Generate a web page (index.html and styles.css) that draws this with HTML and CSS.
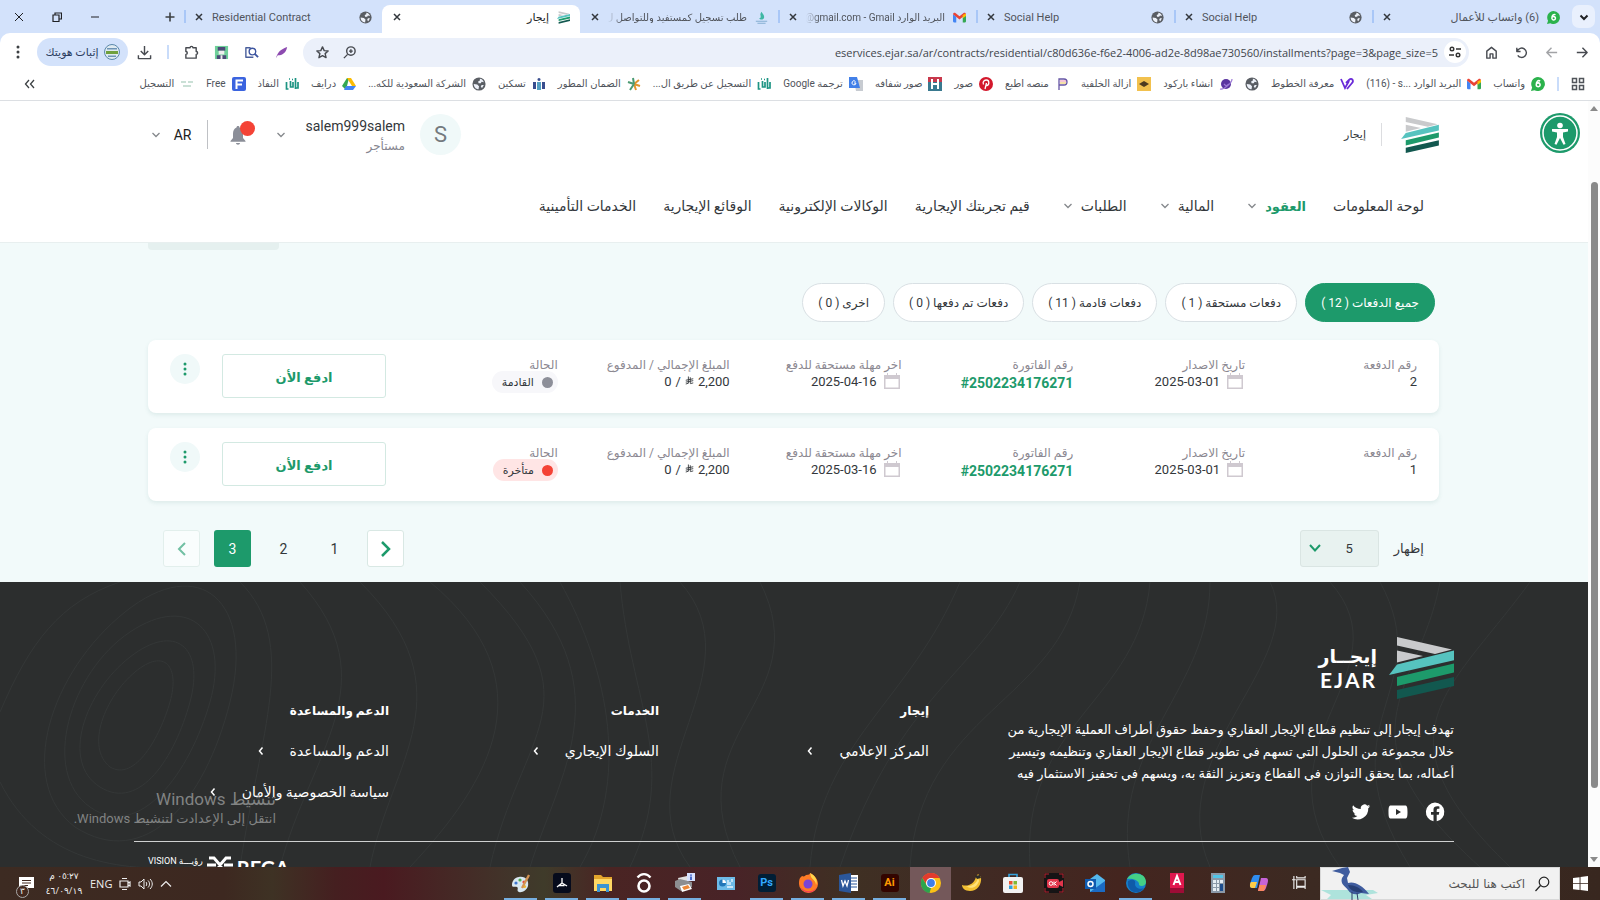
FILE: index.html
```html
<!DOCTYPE html>
<html lang="ar" dir="rtl">
<head>
    <meta charset="UTF-8">
    <meta name="viewport" content="width=device-width, initial-scale=1.0">
    <title>إيجار</title>
    <link rel="stylesheet" href="styles.css">
</head>
<body>

<!-- Shared icons -->
<svg class="sprite" width="0" height="0">
    <symbol id="logo" viewBox="0 0 65 62">
        <path fill="#c9cacc" d="M8 0l55 12.500-17 4.500L8 8.500zM8 13.500l26 5.500-26 6.500z"/>
        <path fill="#56c3bf" d="M65 13.500v9.800L0 38l8-10.500z"/>
        <path fill="#1d9a6b" d="M65 26.500v9L8 49v-9z"/>
        <path fill="#12584f" d="M65 40v9L8 62v-9z"/>
    </symbol>
    <symbol id="globe" viewBox="0 0 16 16">
        <circle cx="8" cy="8" r="7.500" fill="#5a5e64"/>
        <path fill="#eef2fa" d="M9 2c2 0 4 2 4.500 4l-2.500-.5-1 1.500H7.500L7 5l2-1zM2 8l4 .5 2 2-.5 3.500C4.500 14 2 11.500 2 8zM13.500 9l-2 3.500L10 11l1-2z"/>
    </symbol>
    <symbol id="close" viewBox="0 0 10 10"><path d="M2 2l6 6M8 2L2 8" fill="none" stroke="#33373d" stroke-width="1.500"/></symbol>
    <symbol id="down" viewBox="0 0 10 10"><path d="M1.500 3L5 6.500 8.500 3" fill="none" stroke="currentColor" stroke-width="1.300"/></symbol>
    <symbol id="left" viewBox="0 0 10 10"><path d="M6.500 1.500L3.500 5l3 3.500" fill="none" stroke="currentColor" stroke-width="1.500"/></symbol>
    <symbol id="gmail" viewBox="0 0 16 12">
        <path fill="#4285f4" d="M1 12h3V5L0 2v9z"/><path fill="#34a853" d="M12 12h3l1-1V2l-4 3z"/>
        <path fill="#ea4335" d="M0 2c0-2 2-2.500 3-1.500L8 4.500l5-4c1-1 3-.5 3 1.500L8 8.500z"/>
        <path fill="#fbbc04" d="M12 3l4-2v3l-4 3z"/>
    </symbol>
    <symbol id="whatsapp" viewBox="0 0 16 16">
        <path fill="#2bb24c" d="M8 0a8 8 0 1 1-4 15L0 16l1.300-4A8 8 0 0 1 8 0z"/>
        <path d="M10.500 4.500C8 3.500 6 5 6 9a2.200 2.200 0 1 0 .5-1.500" fill="none" stroke="#fff" stroke-width="1.800"/>
    </symbol>
    <symbol id="nafath" viewBox="0 0 14 14">
        <path d="M1.500 5v7h2M5.500 4v6H8V5M10.500 1v11M13 5v6h-2M4 2h1M7 2.500h1" fill="none" stroke="#1d9483" stroke-width="1.700"/>
    </symbol>
    <symbol id="calendar" viewBox="0 0 16 16">
        <path fill="#cfc9d0" d="M0 2h3V0h1v2h8V0h1v2h3v14H0zM1.500 6v8.500h13V6z" fill-rule="evenodd"/>
    </symbol>
    <symbol id="riyal" viewBox="0 0 12 12">
        <path d="M4.500 0v9L1 10M7 1v8M1 5l10-2M1 7.500l10-2M7 9.500l4-1" fill="none" stroke="#33373b" stroke-width="1.200"/>
    </symbol>
    <symbol id="dots" viewBox="0 0 4 14"><circle cx="2" cy="2" r="1.500"/><circle cx="2" cy="7" r="1.500"/><circle cx="2" cy="12" r="1.500"/></symbol>
</svg>

<!-- Browser tabs -->
<div class="tab-strip">
    <button class="tab-search" aria-label="Tabs"><svg width="12" height="12" viewBox="0 0 12 12"><path d="M2.500 4.500L6 8l3.500-3.500" fill="none" stroke="#202124" stroke-width="2"/></svg></button>
    <div class="tab"><svg class="favicon"><use href="#whatsapp"/></svg><span class="tab-title">(6) واتساب للأعمال</span><svg class="tab-close"><use href="#close"/></svg></div>
    <div class="tab"><svg class="favicon"><use href="#globe"/></svg><span class="tab-title" dir="ltr">Social Help</span><svg class="tab-close"><use href="#close"/></svg></div>
    <div class="tab"><svg class="favicon"><use href="#globe"/></svg><span class="tab-title" dir="ltr">Social Help</span><svg class="tab-close"><use href="#close"/></svg></div>
    <div class="tab"><svg class="favicon"><use href="#gmail"/></svg><span class="tab-title fade">البريد الوارد <bdi>@gmail.com - Gmail</bdi></span><svg class="tab-close"><use href="#close"/></svg></div>
    <div class="tab before-active"><svg class="favicon" viewBox="0 0 16 16"><path fill="#3fb7a4" d="M8 1c2 3 4 5 3 8-1 2-5 2-6 0 2 0 2-1 2-3-1-2 0-3 1-5z"/><path d="M1 12.500h14M3 15h10" stroke="#85aed2" stroke-width="1.300"/></svg><span class="tab-title fade">طلب تسجيل كمستفيد وللتواصل ل</span><svg class="tab-close"><use href="#close"/></svg></div>
    <div class="tab active"><svg class="favicon"><use href="#logo"/></svg><span class="tab-title">إيجار</span><svg class="tab-close"><use href="#close"/></svg></div>
    <div class="tab"><svg class="favicon"><use href="#globe"/></svg><span class="tab-title" dir="ltr">Residential Contract</span><svg class="tab-close"><use href="#close"/></svg></div>
    <button class="new-tab" aria-label="New tab"><svg width="12" height="12" viewBox="0 0 12 12"><path d="M6 1.500v9M1.500 6h9" stroke="#3c4043" stroke-width="1.600"/></svg></button>
    <div class="window-buttons">
        <button aria-label="Minimize"><svg width="10" height="10" viewBox="0 0 10 10"><path d="M1 5h8" stroke="#202124"/></svg></button>
        <button aria-label="Restore"><svg width="10" height="10" viewBox="0 0 10 10"><path d="M1 3h6v6.500H1zM3 3V1h6.500v6H7" fill="none" stroke="#202124" stroke-width="1.200"/></svg></button>
        <button aria-label="Close"><svg width="10" height="10" viewBox="0 0 10 10"><path d="M1 1l8 8M9 1L1 9" stroke="#202124"/></svg></button>
    </div>
</div>

<!-- Address bar -->
<div class="toolbar">
    <div class="nav-buttons">
        <button aria-label="Forward"><svg viewBox="0 0 16 16"><path d="M3 8h11M9 3l5 5-5 5"/></svg></button>
        <button class="off" aria-label="Back"><svg viewBox="0 0 16 16"><path d="M14 8H3M8 3L3 8l5 5"/></svg></button>
        <button aria-label="Reload"><svg viewBox="0 0 16 16"><path d="M3 3v4h4M3.500 6.500A5 5 0 1 1 4 11"/></svg></button>
        <button aria-label="Home"><svg viewBox="0 0 16 16"><path d="M3 14V6.500L8 2.500l5 4V14H9.500V9.500h-3V14z"/></svg></button>
    </div>
    <div class="omnibox">
        <button class="site-info" aria-label="Site info"><svg width="14" height="14" viewBox="0 0 14 14"><path d="M8 4h5M1 10h5" stroke="#333" stroke-width="1.500"/><circle cx="4" cy="4" r="1.800" fill="none" stroke="#333" stroke-width="1.400"/><circle cx="10" cy="10" r="1.800" fill="none" stroke="#333" stroke-width="1.400"/></svg></button>
        <input class="url" type="text" dir="ltr" aria-label="Address" value="eservices.ejar.sa/ar/contracts/residential/c80d636e-f6e2-4006-ad2e-8d98ae730560/installments?page=3&amp;page_size=5">
        <svg viewBox="0 0 16 16"><circle cx="9.500" cy="6.500" r="4.500"/><path d="M6 10l-4 4M9.500 4.500v4M7.500 6.500h4"/></svg>
        <svg viewBox="0 0 16 16"><path d="M8 2l1.800 4 4.200.4-3.200 2.800 1 4.300L8 11.300l-3.800 2.200 1-4.300L2 6.400 6.200 6z"/></svg>
    </div>
    <div class="extensions">
        <svg viewBox="0 0 16 16"><path d="M2 14C4 7 8 4 14 2c-1 6-5 9-10 9z" fill="#8d4bb0" stroke="none"/></svg>
        <svg viewBox="0 0 16 16"><path d="M7 3H2v10h8" stroke="#4a5f9c"/><circle cx="9" cy="7" r="3.500" stroke="#3d55a0"/><path d="M11.500 9.500L15 13" stroke="#3d55a0" stroke-width="2"/></svg>
        <svg viewBox="0 0 16 16"><path fill="#6ed09a" stroke="none" d="M1 1h14v14H1z"/><path fill="#4c4a78" stroke="none" d="M4 2h8v4H4zM3 15v-4h10v4z"/><path fill="#eee" stroke="none" d="M5 6h6v4H5zM7 11h2v4H7z"/></svg>
        <svg viewBox="0 0 16 16"><path d="M2 3h4.500a1.500 1.500 0 0 1 3 0H13v4a1.500 1.500 0 0 1 0 3v4H2v-4a1.500 1.500 0 0 0 0-3z"/></svg>
        <span class="bar"></span>
        <svg viewBox="0 0 16 16"><path d="M8 1v9M4 6.500l4 4 4-4M1.500 11v3.500h13V11"/></svg>
    </div>
    <button class="profile"><svg width="16" height="16" viewBox="0 0 16 16"><circle cx="8" cy="8" r="7.500" fill="#dfeaf0" stroke="#5b88aa"/><path fill="#6fa03c" d="M2 7h12v3H2z"/><path fill="#6e94b5" d="M3 4h10v1.500H3zM4 11.500h8V13H4z"/></svg><span>إثبات هويتك</span></button>
    <button class="menu" aria-label="Menu"><svg width="4" height="14" fill="#3c4043"><use href="#dots"/></svg></button>
</div>

<!-- Bookmarks -->
<nav class="bookmarks">
    <svg class="apps" viewBox="0 0 14 14"><path d="M1.500 1.500h4v4h-4zM8.500 1.500h4v4h-4zM1.500 8.500h4v4h-4zM8.500 8.500h4v4h-4z" fill="none" stroke="#50545a" stroke-width="1.500"/></svg>
    <span class="bar"></span>
    <a href="#"><svg><use href="#whatsapp"/></svg>واتساب</a>
    <a href="#"><svg><use href="#gmail"/></svg><span>البريد الوارد <bdi dir="ltr">(116) - s...</bdi></span></a>
    <a href="#"><svg viewBox="0 0 14 14"><path d="M1 2l4 9 4-7M6 6l3-3c3-3 5 1 3 3l-5 6" fill="none" stroke="#6a2bd8" stroke-width="1.800"/></svg>معرفة الخطوط</a>
    <a href="#" aria-label="Site"><svg><use href="#globe"/></svg></a>
    <a href="#"><svg viewBox="0 0 14 14"><circle cx="7" cy="7" r="5" fill="#5a35a0"/><path d="M1 12C5 13 13 6 13 2M5 7l2 2 3-2" fill="none" stroke="#9c7ad6" stroke-width="1.200"/></svg>انشاء باركود</a>
    <a href="#"><svg viewBox="0 0 14 14"><path fill="#f2c14e" d="M0 0h14v14H0z"/><path fill="#4e3b20" d="M2 7l5-3 5 3-5 3z"/></svg>ازالة الخلفية</a>
    <a href="#"><svg viewBox="0 0 14 14"><path d="M4 13V2h5a3 3 0 0 1 0 6H4" fill="#fff" stroke="#6655a5" stroke-width="1.300"/><path d="M5 4h6" stroke="#eb8ab2"/><path d="M5 6h6" stroke="#e9c351"/></svg>منصه اطبع</a>
    <a href="#"><svg viewBox="0 0 14 14"><circle cx="7" cy="7" r="7" fill="#d3182c"/><path d="M6 12l1.500-6M4.500 7.500C3 4 6 3 7.500 3c3 0 3 5 .5 5.500C7 8.500 6.800 8 6.800 8" fill="none" stroke="#fff" stroke-width="1.300"/></svg>صور</a>
    <a href="#"><svg viewBox="0 0 14 14"><path fill="#c8394c" d="M0 0h14v5H0z"/><path fill="#39798f" d="M0 5h14v9H0z"/><path fill="#fff" d="M3 2h2v4h4V2h2v10H9V8H5v4H3z"/></svg>صور شفافه</a>
    <a href="#"><svg viewBox="0 0 14 14"><path fill="#c7cbd1" d="M5 3h9v11H7z"/><path fill="#4280e8" d="M0 0h8l3 11H0z"/><path d="M6.500 4.500A2 2 0 1 0 7 6H5" fill="none" stroke="#fff"/></svg><span>ترجمة Google</span></a>
    <a href="#"><svg><use href="#nafath"/></svg>التسجيل عن طريق ال...</a>
    <a href="#"><svg viewBox="0 0 14 14"><path d="M7 7l5-4M7 7l6 2M7 7l2 6" stroke="#e2952c" stroke-width="2"/><path d="M7 7L1 5M7 7l-4 6M7 7L6 1" stroke="#4b9a72" stroke-width="2"/></svg>الضمان المطور</a>
    <a href="#"><svg viewBox="0 0 14 14"><path fill="#394d8e" d="M7 1c2 0 2 3 0 3s-2-3 0-3zM1 5h3v7H1zM10 5h3v7h-3z"/><path fill="#54a0c2" d="M5 5h4v8H5z"/></svg>تسكين</a>
    <a href="#"><svg><use href="#globe"/></svg>الشركة السعودية للكه...</a>
    <a href="#"><svg viewBox="0 0 14 14"><path fill="#34a853" d="M5 1h2L4 13 0 9z"/><path fill="#fbbc04" d="M5 1h4l5 8h-4z"/><path fill="#4285f4" d="M4 9h10l-3 4H2z"/></svg>درايف</a>
    <a href="#"><svg><use href="#nafath"/></svg>النفاذ</a>
    <a href="#"><svg viewBox="0 0 14 14"><rect width="14" height="14" rx="2" fill="#3b64df"/><path d="M4.500 12V3.500H11M4.500 7.500H10" fill="none" stroke="#fff" stroke-width="2"/></svg>Free</a>
    <a href="#"><svg viewBox="0 0 14 14"><path d="M1 5h5M8 5h5M3 9h8" stroke="#b9d6c9" stroke-width="1.500"/></svg>التسجيل</a>
    <button class="more" aria-label="More bookmarks"><svg width="12" height="12" viewBox="0 0 12 12"><path d="M5 2L1.500 6 5 10M10 2L6.500 6l3.500 4" fill="none" stroke="#3c4043" stroke-width="1.300"/></svg></button>
</nav>

<div class="viewport">
    <div class="scrollbar">
        <svg width="8" height="6" viewBox="0 0 8 6"><path d="M0 5h8L4 0z" fill="#8a8a8a"/></svg>
        <div class="track"><div class="thumb"></div></div>
        <svg width="8" height="6" viewBox="0 0 8 6"><path d="M0 1h8L4 6z" fill="#8a8a8a"/></svg>
    </div>

    <div class="page">
        <header class="site-header">
            <div class="top-row">
                <div class="brand">
                    <svg width="38" height="36"><use href="#logo"/></svg>
                    <span class="brand-line"></span>
                    <span class="brand-name">إيجار</span>
                </div>
                <div class="account">
                    <span class="avatar">S</span>
                    <div class="user"><span class="user-name">salem999salem</span><span class="user-role">مستأجر</span></div>
                    <svg class="chev"><use href="#down"/></svg>
                    <button class="bell" aria-label="Notifications"><svg width="16" height="20" viewBox="0 0 16 20"><path fill="#8b8e98" d="M8 1c1 0 1.500.7 1.500 1.500C12 3.500 13 6 13 9v4l2.500 3v.8H.5V16L3 13V9c0-3 1-5.500 3.500-6.500C6.500 1.700 7 1 8 1zM6 18h4c0 2.300-4 2.300-4 0z"/></svg><span class="badge"></span></button>
                    <span class="lang-line"></span>
                    <button class="lang">AR <svg class="chev"><use href="#down"/></svg></button>
                </div>
            </div>
            <nav class="main-nav">
                <a href="#">لوحة المعلومات</a>
                <a href="#" class="current">العقود <svg class="chev"><use href="#down"/></svg></a>
                <a href="#">المالية <svg class="chev"><use href="#down"/></svg></a>
                <a href="#">الطلبات <svg class="chev"><use href="#down"/></svg></a>
                <a href="#">قيم تجربتك الإيجارية</a>
                <a href="#">الوكالات الإلكترونية</a>
                <a href="#">الوقائع الإيجارية</a>
                <a href="#">الخدمات التأمينية</a>
            </nav>
            <button class="access" aria-label="Accessibility"><svg width="40" height="40" viewBox="0 0 40 40"><circle cx="20" cy="20" r="20" fill="#1d9a6b"/><circle cx="20" cy="20" r="17" fill="none" stroke="#fff" stroke-width="1.500"/><circle cx="20" cy="12.500" r="2.800" fill="#fff"/><path fill="#fff" d="M12 16h16v2.500l-5 1V24l2.500 7-2 .7L20 25l-3.500 6.700-2-.7 2.500-7v-4.500l-5-1z"/></svg></button>
        </header>

        <main class="content">
            <div class="scrolled-button"></div>
            <div class="filters">
                <button class="selected">جميع الدفعات ( 12 )</button>
                <button>دفعات مستحقة ( 1 )</button>
                <button>دفعات قادمة ( 11 )</button>
                <button>دفعات تم دفعها ( 0 )</button>
                <button>اخرى ( 0 )</button>
            </div>

            <div class="payment">
                <div class="cell"><span class="label">رقم الدفعة</span><span class="value">2</span></div>
                <div class="cell"><span class="label">تاريخ الاصدار</span><span class="value"><svg class="cal"><use href="#calendar"/></svg><span>2025-03-01</span></span></div>
                <div class="cell"><span class="label">رقم الفاتورة</span><a href="#" class="invoice" dir="ltr">#2502234176271</a></div>
                <div class="cell"><span class="label">اخر مهلة مستحقة للدفع</span><span class="value"><svg class="cal"><use href="#calendar"/></svg><span>2025-04-16</span></span></div>
                <div class="cell"><span class="label">المبلغ الإجمالي / المدفوع</span><span class="value amount"><span>2,200</span><svg class="sar"><use href="#riyal"/></svg><span>/</span><span>0</span></span></div>
                <div class="cell"><span class="label">الحالة</span><span class="status"><i></i>القادمة</span></div>
                <button class="pay">ادفع الأن</button>
                <button class="options" aria-label="Options"><svg width="4" height="14"><use href="#dots"/></svg></button>
            </div>

            <div class="payment">
                <div class="cell"><span class="label">رقم الدفعة</span><span class="value">1</span></div>
                <div class="cell"><span class="label">تاريخ الاصدار</span><span class="value"><svg class="cal"><use href="#calendar"/></svg><span>2025-03-01</span></span></div>
                <div class="cell"><span class="label">رقم الفاتورة</span><a href="#" class="invoice" dir="ltr">#2502234176271</a></div>
                <div class="cell"><span class="label">اخر مهلة مستحقة للدفع</span><span class="value"><svg class="cal"><use href="#calendar"/></svg><span>2025-03-16</span></span></div>
                <div class="cell"><span class="label">المبلغ الإجمالي / المدفوع</span><span class="value amount"><span>2,200</span><svg class="sar"><use href="#riyal"/></svg><span>/</span><span>0</span></span></div>
                <div class="cell"><span class="label">الحالة</span><span class="status late"><i></i>متأخرة</span></div>
                <button class="pay">ادفع الأن</button>
                <button class="options" aria-label="Options"><svg width="4" height="14"><use href="#dots"/></svg></button>
            </div>

            <div class="list-footer">
                <div class="page-size">
                    <label for="pageSize">إظهار</label>
                    <div class="select-box">
                        <select id="pageSize"><option>5</option></select>
                        <svg width="14" height="14" viewBox="0 0 14 14"><path d="M2 4l5 5.500L12 4" fill="none" stroke="#1d9a6b" stroke-width="2"/></svg>
                    </div>
                </div>
                <div class="pager">
                    <button class="arrow" aria-label="Previous"><svg width="16" height="18" viewBox="0 0 16 18"><path d="M4 2l7 7-7 7" fill="none" stroke="#1d9a6b" stroke-width="2.500"/></svg></button>
                    <button>1</button>
                    <button>2</button>
                    <button class="selected">3</button>
                    <button class="arrow" disabled aria-label="Next"><svg width="16" height="18" viewBox="0 0 16 18"><path d="M11 3L5 9l6 6" fill="none" stroke="#1d9a6b" stroke-width="2"/></svg></button>
                </div>
            </div>
        </main>

        <footer class="site-footer">
            <svg class="contours" viewBox="0 0 1588 285" preserveAspectRatio="none" fill="none" stroke="#343737">
                <path d="M110 185c-25-20-5-70 25-95s45-5 35 30-35 80-60 65zM100 205c-40-25-15-95 30-130s75-10 60 45-50 110-90 85zM90 225C40 190 70 90 130 50s100 0 80 70-70 140-120 105zM75 245C15 200 50 90 125 30s130-10 105 90S145 290 75 245zM0 130C30 60 60 20 120 0M0 200c40 80 120 90 190 85"/>
                <path d="M240 0c60 60 20 150 0 285M300 0c90 100 10 170-20 285M360 0c110 110 30 180 10 285M430 0c120 100 60 200-20 285M480 0c120 120 40 150 10 285M520 0c100 110 40 190 10 285M560 0c50 90 70 200 20 285M620 0c10 120 60 180 10 285M680 0c80 90-60 190 10 285M760 0c60 120-90 150-20 285"/>
                <path d="M960 0c-50 120-140 160-150 285M1020 0c-40 90-120 110-180 285M1080 0c-20 120-160 130-170 285M1150 0c-10 120-130 140-120 285M1210 0c0 110-100 160-80 285M1270 0c40 80-110 170-60 285M1330 0c80 90-80 160 10 285M1380 0c60 110-60 140 30 285M1440 0c-20 110-110 150 40 285M1530 0c-80 110-160 150-20 285"/>
            </svg>
            <div class="footer-main">
                <div class="about">
                    <div class="footer-logo"><svg width="65" height="62"><use href="#logo"/></svg><div class="logo-text"><b>إيجــار</b><b class="latin">EJAR</b></div></div>
                    <p>تهدف إيجار إلى تنظيم قطاع الإيجار العقاري وحفظ حقوق أطراف العملية الإيجارية من<br>خلال مجموعة من الحلول التي تسهم في تطوير قطاع الإيجار العقاري وتنظيمه وتيسير<br>أعماله، بما يحقق التوازن في القطاع وتعزيز الثقة به، ويسهم في تحفيز الاستثمار فيه</p>
                    <div class="social">
                        <a href="#" aria-label="Facebook"><svg viewBox="0 0 20 20"><path fill="#fff" d="M10 .5a9.500 9.500 0 0 1 1.700 18.800v-6.500h2.100l.5-2.800h-2.600V8.300c0-.9.400-1.600 1.500-1.600h1.200V4.400C11 3.800 8.500 4.400 8.500 7.600V10H6v2.800h2.500v6.500A9.500 9.500 0 0 1 10 .5z"/></svg></a>
                        <a href="#" aria-label="YouTube"><svg viewBox="0 0 20 20"><path fill="#fff" fill-rule="evenodd" d="M3 3.500h14c2 0 2.500 1.500 2.500 6.500s-.5 6.500-2.500 6.500H3C1 16.500.5 15 .5 10S1 3.500 3 3.500zM8 7v6l5-3z"/></svg></a>
                        <a href="#" aria-label="Twitter"><svg viewBox="0 0 24 24"><path fill="#fff" d="M23 5.100a9 9 0 0 1-2.600.7 4.500 4.500 0 0 0 2-2.500c-.9.500-1.900.9-2.900 1.100a4.500 4.500 0 0 0-7.700 4.100A12.800 12.800 0 0 1 2.500 3.800a4.500 4.500 0 0 0 1.400 6 4.500 4.500 0 0 1-2-.6c0 2.200 1.500 4.100 3.600 4.500-.7.200-1.400.2-2 .1a4.500 4.500 0 0 0 4.200 3.100A9 9 0 0 1 1 18.800 12.800 12.800 0 0 0 20.700 7.400c.9-.6 1.700-1.400 2.300-2.300z"/></svg></a>
                    </div>
                </div>
                <div class="links">
                    <h4>إيجار</h4>
                    <a href="#">المركز الإعلامي <svg><use href="#left"/></svg></a>
                </div>
                <div class="links">
                    <h4>الخدمات</h4>
                    <a href="#">السلوك الإيجاري <svg><use href="#left"/></svg></a>
                </div>
                <div class="links">
                    <h4>الدعم والمساعدة</h4>
                    <a href="#">الدعم والمساعدة <svg><use href="#left"/></svg></a>
                    <a href="#">سياسة الخصوصية والأمان <svg><use href="#left"/></svg></a>
                </div>
            </div>
            <div class="partners">
                <b>REGA</b>
                <svg width="26" height="22" viewBox="0 0 26 22"><path d="M2 2h5l6 7 6-7h5M0 9h9M26 9h-9M4 20l9-10 9 10" fill="none" stroke="#fff" stroke-width="3"/></svg>
                <span>VISION رؤيـــة</span>
            </div>
        </footer>

        <div class="activate"><span class="activate-title">تنشيط Windows</span><span>انتقل إلى الإعدادت لتنشيط Windows.</span></div>
    </div>
</div>

<!-- Windows taskbar -->
<div class="taskbar">
    <button class="start" aria-label="Start"><svg width="15" height="15" viewBox="0 0 16 16"><path fill="#fff" d="M0 2.200l7-1v6.500H0zM8 1l8-1v7.700H8zM0 8.500h7V15l-7-1zM8 8.500h8V16l-8-1z"/></svg></button>
    <div class="search">
        <svg width="16" height="16" viewBox="0 0 16 16"><circle cx="10" cy="6" r="4.800" fill="none" stroke="#222" stroke-width="1.200"/><path d="M6.500 9.500L1.500 15" stroke="#222" stroke-width="1.200"/></svg>
        <input type="text" placeholder="اكتب هنا للبحث" aria-label="بحث">
        <svg width="58" height="33" viewBox="0 0 58 33"><path fill="#aee3dc" d="M0 23h52l5 3-12 2 6 4H6l4-4z"/><path fill="#3f5c9e" d="M11 4l10-3 6-1 2 5-3 6 1 5c6-2 14 2 21 11l-8-1c-4 2-10 2-13-3-3-4-8-6-6-12l2-3-4-2z"/><path fill="#273f75" d="M27 18c7 0 12 3 15 7-7 1-13-1-15-7z"/><path d="M31 25v8M36 26l1 7" stroke="#2d3d68"/></svg>
    </div>
    <button class="task" aria-label="Task view"><svg class="small" viewBox="0 0 16 16"><path d="M2 1v14M0 5h4M5 5h9v7H5zM5 1v2h9V1M5 15v-2h9v2" fill="none" stroke="#eee" stroke-width="1.200"/></svg></button>
    <button class="task" aria-label="Copilot"><svg viewBox="0 0 20 20"><path fill="#2f8df0" d="M6 2h5L8 15H3c-3 0-2-4-1-7s2-6 4-6z"/><path fill="#ffcb47" d="M2 9h6l-2 6H3c-2 0-3-3-1-6z"/><path fill="#c763d8" d="M14 18H9l3-13h5c3 0 2 4 1 7s-2 6-4 6z"/><path fill="#fb8760" d="M9 18l1.500-6H17c-1 4-1.500 6-3 6z"/></svg></button>
    <button class="task" aria-label="Calculator"><svg viewBox="0 0 20 20"><path fill="#8b99a8" d="M3 0h14v20H3z"/><path fill="#52c5e8" d="M5 2h10v3H5z"/><path fill="#e6edf3" d="M5 7h3v3H5zM9 7h2v3H9zM5 11h3v3H5zM9 11h2v3H9zM5 15h3v3H5zM9 15h2v3H9zM12 7h3v3h-3z"/><path fill="#1d4d8c" d="M12 11h3v7h-3z"/></svg></button>
    <button class="task" aria-label="AutoCAD"><svg viewBox="0 0 20 20"><path fill="#e0184e" d="M3 0h14v20H3z"/><path fill="#9d0c36" d="M3 15h14v5H3z"/><path d="M6.500 12L10 3l3.500 9M8 9h4" fill="none" stroke="#fff" stroke-width="2"/></svg></button>
    <button class="task open" aria-label="Edge"><svg viewBox="0 0 20 20"><circle cx="10" cy="10" r="10" fill="#1580cc"/><path fill="#45cf86" d="M1 6c4-8 19-7 19 3 0 4-5 5-7 3 1-5-8-7-12-6z"/><path fill="#0f5ba8" d="M2 8c6-3 8 0 7 3 0 4 5 6 9 4-5 8-18 4-16-7z"/></svg></button>
    <button class="task" aria-label="Outlook"><svg viewBox="0 0 20 20"><path fill="#54b8ee" d="M5 6l7-5 8 6v12H5z"/><path fill="#1b6bc4" d="M5 19l15-11v11z"/><path fill="#0f5bb0" d="M0 6h11v10H0z"/><circle cx="5.500" cy="11" r="2.500" fill="none" stroke="#fff" stroke-width="1.500"/></svg></button>
    <button class="task" aria-label="Recorder"><svg viewBox="0 0 20 20"><rect width="20" height="20" rx="3" fill="#161415"/><path d="M1 5V1h4M15 1h4v4M1 15v4h4M15 19h4v-4" fill="none" stroke="#b6212f"/><rect x="3" y="6" width="12" height="9" rx="2" fill="#e1354b"/><path fill="#e1354b" d="M15 9l4-2v7l-4-2z"/><circle cx="7" cy="10.500" r="1.800" fill="none" stroke="#fff"/><path d="M10 8.500v4M12.500 8.500l-2 2 2 2" fill="none" stroke="#fff"/></svg></button>
    <button class="task" aria-label="Store"><svg viewBox="0 0 20 20"><path d="M6 5V1.500h8V5" fill="none" stroke="#36a3dd" stroke-width="1.600"/><rect x="0" y="4" width="20" height="16" rx="2" fill="#f2f2f2"/><path fill="#e95433" d="M6 8h3.500v3.500H6z"/><path fill="#80b935" d="M10.500 8H14v3.500h-3.500z"/><path fill="#2da0dc" d="M6 12.500h3.500V16H6z"/><path fill="#f1b51c" d="M10.500 12.500H14V16h-3.500z"/></svg></button>
    <button class="task" aria-label="Banana"><svg viewBox="0 0 20 20"><path fill="#f2bf32" d="M16 1l3 3c1 8-4 14-11 14-5 0-8-3-8-6 6 2 12-1 14-8z"/><path fill="#ffe27a" d="M4 13c6 1 11-3 12-8l1 3c-2 6-7 9-13 5z"/><path fill="#2a2a2a" d="M13 3l5-1 1 3-4 1z"/></svg></button>
    <button class="task current" aria-label="Chrome"><svg viewBox="0 0 20 20"><circle cx="10" cy="10" r="10" fill="#fbc116"/><path fill="#e33b2e" d="M1.300 5A10 10 0 0 1 18.700 5H10L6 12z"/><path fill="#2da44e" d="M1.300 5L6 12.500l4 2.500-1.500 5A10 10 0 0 1 1.300 5z"/><circle cx="10" cy="10" r="5" fill="#fff"/><circle cx="10" cy="10" r="3.900" fill="#3f7ee8"/></svg></button>
    <button class="task open" aria-label="Illustrator"><span class="adobe ai">Ai</span></button>
    <button class="task open" aria-label="Word"><svg viewBox="0 0 20 20"><path fill="#fff" d="M10 2h9v16h-9z"/><path d="M12 5h6M12 8h6M12 11h6M12 14h6" stroke="#2b579a"/><path fill="#2b579a" d="M0 2l12-2v20L0 18z"/><path d="M2.500 7L4 13l2-5 2 5 1.500-6" fill="none" stroke="#fff" stroke-width="1.300"/></svg></button>
    <button class="task open" aria-label="Firefox"><svg viewBox="0 0 20 20"><path fill="#ff7b26" d="M2 5l2-2c2 1 3 0 4-1 3 0 4-1 4-2 4 2 8 6 8 11a9.500 9 0 0 1-19 0c0-2 0-4 1-6z"/><path fill="#f23b5d" d="M1 9c0 9 13 13 18 5-3 8-17 8-18-5z"/><circle cx="10" cy="11" r="4.500" fill="#7a44d6"/><path fill="#ffd54b" d="M12 0c6 3 8 8 6 12 0-4-3-5-5-8z"/></svg></button>
    <button class="task open" aria-label="Photoshop"><span class="adobe ps">Ps</span></button>
    <button class="task" aria-label="Control panel"><svg viewBox="0 0 20 20"><rect x="1" y="4" width="18" height="13" fill="#6dbbe8"/><circle cx="6.500" cy="10" r="3.500" fill="#2377b8"/><path d="M6.500 10V6.500A3.500 3.500 0 0 1 10 10z" fill="#fff"/><path d="M12 7v5M14 9v3M16 6v3M11 14h6" stroke="#e9f6ff" stroke-width="1.300"/></svg></button>
    <button class="task open" aria-label="Printer"><svg viewBox="0 0 20 20"><path fill="#e2e2e2" d="M3 5l9-2 2 5-9 4z"/><path fill="#8c8e91" d="M0 8l5-2 12 3v5l-11 4-6-4z"/><path fill="#fff" d="M5 13l9-2 3 5-10 3z"/><path fill="#ec8838" d="M7 14l6-2 2 3-6 2z"/><path fill="#d7e2ff" d="M12 0h8v8h-8z"/><path d="M16 1.500v1.200M16 3.500V7" stroke="#244abb" stroke-width="1.600"/></svg></button>
    <button class="task open" aria-label="Scanner"><svg viewBox="0 0 20 20"><circle cx="10" cy="13" r="5.500" fill="none" stroke="#fff" stroke-width="2.600"/><path d="M3.500 4.500C7 0 13 0 16.500 4.500" fill="none" stroke="#fff" stroke-width="2.200"/></svg></button>
    <button class="task open" aria-label="Explorer"><svg viewBox="0 0 20 20"><path fill="#e3a52d" d="M1 2h7l2 2h9v14H1z"/><path fill="#ffd764" d="M1 6h18v12H1z"/><path fill="#3b93d3" d="M4 11h12v8h-3v-4H7v4H4z"/></svg></button>
    <button class="task open" aria-label="Acrobat"><svg viewBox="0 0 20 20"><rect x="1" width="18" height="20" rx="3" fill="#060b1c"/><path d="M10 5v5l-5 4M10 10l5 3M6.500 12.500h6" fill="none" stroke="#fff" stroke-width="1.300"/></svg></button>
    <button class="task open" aria-label="Paint"><svg viewBox="0 0 20 20"><path fill="#d8e8f1" d="M8 4c7-1 10 4 9 9-1 4-6 7-9 6s0-4-2-5-5 1-5-2c0-4 3-8 7-8z"/><circle cx="5" cy="10" r="1.600" fill="#3d76cf"/><circle cx="9" cy="7" r="1.600" fill="#4cae4f"/><circle cx="13" cy="9" r="1.600" fill="#e5473c"/><circle cx="13.500" cy="13.500" r="1.600" fill="#f0b92d"/><path d="M11 15l7-13" stroke="#d39453" stroke-width="2.300"/></svg></button>

    <div class="tray">
        <svg width="12" height="12" viewBox="0 0 12 12"><path d="M1 8.500L6 3.500l5 5" fill="none" stroke="#eee" stroke-width="1.200"/></svg>
        <svg width="15" height="14" viewBox="0 0 15 14"><path d="M1 5h2l3-3v10L3 9H1zM8 5c1 1 1 3 0 4M10 3.500c2 2 2 5 0 7M12 2c3 3 3 7 0 10" fill="none" stroke="#eee"/></svg>
        <svg width="12" height="14" viewBox="0 0 12 14"><path d="M1 4h8v6H1zM9 6l2-1v4l-2-1M3 1.500h5M3 12.500h5" fill="none" stroke="#eee" stroke-width="1.200"/></svg>
        <span class="keyboard">ENG</span>
        <div class="clock"><span>٠٥:٢٧ م</span><span>٤٦/٠٩/١٩</span></div>
        <button class="notes" aria-label="Notifications"><svg width="15" height="14" viewBox="0 0 15 14"><path fill="#fff" d="M0 0h15v11H9l-3 3v-3H0z"/><path d="M3 3.500h9M3 6h9M3 8.500h6" stroke="#42291f"/></svg><span>٣</span></button>
    </div>
</div>

</body>
</html>
```

FILE: styles.css
```css
* {
    box-sizing: border-box;
}
body {
    margin: 0;
    height: 100vh;
    display: flex;
    flex-direction: column;
    overflow: hidden;
    background: #d3e2fb;
    color: #33373b;
    font-family: Roboto, "DejaVu Sans", sans-serif;
    font-size: 12px;
}
button {
    border: 0;
    padding: 0;
    background: none;
    color: inherit;
    font: inherit;
    cursor: pointer;
    display: flex;
    align-items: center;
    justify-content: center;
}
a {
    color: inherit;
    text-decoration: none;
}
svg {
    flex: none;
    display: block;
}
.sprite {
    position: absolute;
}

/* tabs */
.tab-strip {
    height: 33px;
    flex: none;
    display: flex;
    align-items: center;
    padding-right: 5px;
    color: #50545b;
    font-size: 11px;
}
.tab-search {
    width: 23px;
    height: 23px;
    border-radius: 7px;
    background: #e9f0fd;
    margin-left: 2px;
}
.tab {
    flex: 0 1 198px;
    min-width: 0;
    height: 28px;
    align-self: flex-end;
    display: flex;
    align-items: center;
    gap: 8px;
    padding: 0 10px 4px;
    position: relative;
}
.tab::after {
    content: "";
    position: absolute;
    left: 0;
    top: 5px;
    width: 2px;
    height: 13px;
    background: #a9c7f7;
}
.tab.active::after,
.tab.before-active::after {
    display: none;
}
.tab.active {
    background: #fff;
    border-radius: 8px 8px 0 0;
    color: #202124;
}
.favicon {
    width: 13px;
    height: 13px;
}
.tab-close {
    width: 10px;
    height: 10px;
}
.tab-title {
    flex: 1;
    min-width: 0;
    overflow: hidden;
    white-space: nowrap;
}
.fade {
    font-size: 10px;
    mask-image: linear-gradient(to left, #000 90%, transparent);
}
.new-tab {
    width: 28px;
    height: 24px;
}
.window-buttons {
    margin-right: auto;
    display: flex;
}
.window-buttons button {
    width: 38px;
    height: 33px;
}

/* toolbar */
.toolbar {
    height: 36px;
    flex: none;
    display: flex;
    align-items: center;
    padding: 2px 4px 0 7px;
    background: #fff;
    border-radius: 10px 10px 0 0;
}
.toolbar svg {
    stroke-linejoin: round;
}
.nav-buttons {
    display: flex;
}
.nav-buttons button {
    width: 30px;
    height: 28px;
}
.nav-buttons svg,
.omnibox > svg,
.extensions svg {
    width: 15px;
    height: 15px;
    fill: none;
    stroke: #474a50;
    stroke-width: 1.5px;
}
.nav-buttons .off {
    opacity: 0.5;
}
.omnibox {
    flex: 1;
    height: 29px;
    margin: 0 7px 0 14px;
    padding: 0 3px 0 12px;
    border-radius: 15px;
    background: #ebf0fa;
    display: flex;
    align-items: center;
    gap: 12px;
}
.site-info {
    width: 22px;
    height: 22px;
    margin-left: -6px;
    border-radius: 50%;
    background: #fff;
}
.url {
    flex: 1;
    min-width: 0;
    border: 0;
    padding: 0;
    background: none;
    color: #41454b;
    font: 11px "Open Sans", sans-serif;
    text-align: right;
}
.extensions {
    display: flex;
    align-items: center;
    gap: 15px;
    margin-left: 9px;
}
.bar {
    width: 2px;
    height: 14px;
    background: #c9dcfa;
}
.profile {
    width: 91px;
    height: 28px;
    border-radius: 14px;
    background: #d3e2fb;
    color: #2b3d60;
    font-size: 11px;
    gap: 5px;
}
.menu {
    width: 22px;
    height: 28px;
    margin-right: 8px;
}

/* bookmarks */
.bookmarks {
    height: 32px;
    flex: none;
    display: flex;
    align-items: center;
    gap: 12px;
    padding: 0 15px 2px 24px;
    background: #fff;
    border-bottom: 1px solid #dcdfe3;
    color: #50545b;
    font-size: 10px;
}
.bookmarks a {
    display: flex;
    align-items: center;
    gap: 6px;
    white-space: nowrap;
}
.bookmarks a svg,
.apps {
    width: 14px;
    height: 14px;
}
.more {
    margin-right: auto;
}

/* page */
.viewport {
    flex: 1;
    min-height: 0;
    display: flex;
    background: #fff;
}
.scrollbar {
    width: 12px;
    display: flex;
    flex-direction: column;
    align-items: center;
    padding: 5px 0;
    background: #fcfcfc;
}
.track {
    flex: 1;
    padding: 70px 0 68px;
}
.thumb {
    width: 7px;
    height: 100%;
    border-radius: 4px;
    background: #8a8a8a;
}
.page {
    flex: 1;
    min-width: 0;
    overflow: hidden;
    position: relative;
    display: flex;
    flex-direction: column;
    background: #f2fafa;
}
.site-header {
    flex: none;
    height: 142px;
    padding: 0 149px 0 148px;
    background: #fff;
    border-bottom: 1px solid #e8efef;
    position: relative;
}
.top-row {
    height: 67px;
    display: flex;
    justify-content: space-between;
    align-items: center;
}
.brand {
    display: flex;
    align-items: center;
}
.brand-line {
    width: 1px;
    height: 23px;
    margin: 0 19px 0 15px;
    background: #dcdde0;
}
.brand-name {
    font-size: 11px;
}
.account {
    width: 313px;
    display: flex;
    align-items: center;
}
.avatar {
    width: 41px;
    height: 41px;
    border-radius: 50%;
    background: #f0f9f9;
    color: #74797e;
    font-size: 22px;
    display: flex;
    align-items: center;
    justify-content: center;
}
.user {
    display: flex;
    flex-direction: column;
    margin: 0 15px 0 20px;
    padding-top: 3px;
    line-height: 20px;
}
.user-name {
    font-size: 14px;
}
.user-role {
    font-size: 12px;
    color: #85858f;
}
.chev {
    width: 10px;
    height: 10px;
    color: #85888c;
}
.bell {
    position: relative;
    margin-right: 30px;
}
.badge {
    position: absolute;
    top: -4px;
    right: -9px;
    width: 15px;
    height: 15px;
    border-radius: 50%;
    background: #f44336;
}
.lang-line {
    width: 1px;
    height: 29px;
    margin: 0 22px 0 15px;
    background: #bfc1c5;
}
.lang {
    gap: 13px;
    font-size: 14px;
    color: #1b1d20;
}
.main-nav {
    height: 75px;
    padding: 1px 15px 0 0;
    display: flex;
    align-items: center;
    gap: 27px;
    font-size: 14px;
    white-space: nowrap;
}
.main-nav a {
    display: flex;
    align-items: center;
    gap: 8px;
}
.main-nav .chev {
    margin-left: 6px;
}
.main-nav .current {
    color: #1d9a6b;
    font-size: 13px;
    font-weight: bold;
}
.access {
    position: absolute;
    top: 12px;
    right: 8px;
}
.content {
    flex: none;
    padding: 0 149px 15px 148px;
}
.scrolled-button {
    width: 131px;
    height: 7px;
    margin-right: auto;
    border-radius: 0 0 4px 4px;
    background: #e5f0ef;
}
.filters {
    display: flex;
    gap: 8px;
    padding: 33px 4px 18px;
}
.filters button {
    height: 39px;
    padding: 0 15px;
    border: 1px solid #d9e0e4;
    border-radius: 20px;
    background: #fff;
    font-size: 12px;
    white-space: nowrap;
}
.filters .selected {
    background: #1d9a6b;
    border-color: #1d9a6b;
    color: #fff;
}
.payment {
    height: 73px;
    margin-bottom: 15px;
    padding: 14px 22px;
    border-radius: 8px;
    background: #fff;
    box-shadow: 0 2px 4px rgba(40, 110, 100, 0.1);
    display: grid;
    grid-template-columns: repeat(6, 1fr) 164px 52px;
}
.cell {
    display: flex;
    flex-direction: column;
    align-items: flex-start;
    white-space: nowrap;
}
.label {
    height: 17px;
    line-height: 22px;
    font-size: 12px;
    color: #8b8891;
}
.value {
    height: 20px;
    display: flex;
    align-items: center;
    gap: 7px;
    font-size: 13px;
}
.cal {
    width: 16px;
    height: 16px;
    margin-right: 2px;
}
.amount {
    gap: 4px;
}
.sar {
    width: 9px;
    height: 10px;
}
.invoice {
    line-height: 24px;
    font-size: 14px;
    font-weight: bold;
    color: #1d9a6b;
}
.status {
    height: 22px;
    padding: 0 5px 0 10px;
    border-radius: 11px;
    background: #f7f7fa;
    display: flex;
    align-items: center;
    gap: 8px;
    font-size: 11px;
}
.status i {
    width: 11px;
    height: 11px;
    border-radius: 50%;
    background: #8d8f99;
}
.late {
    background: #ffe5e5;
}
.late i {
    background: #f44336;
}
.pay {
    height: 44px;
    padding-top: 3px;
    border: 1px solid #d3e9e2;
    border-radius: 3px;
    color: #1d9a6b;
    font-size: 13px;
    font-weight: bold;
}
.options {
    width: 30px;
    height: 30px;
    margin-right: auto;
    border-radius: 50%;
    background: #f0f9f9;
    fill: #1d9a6b;
}
.list-footer {
    display: flex;
    justify-content: space-between;
    padding: 14px 15px 0;
}
.page-size {
    display: flex;
    align-items: center;
    gap: 15px;
    font-size: 13px;
}
.select-box {
    position: relative;
}
.select-box select {
    appearance: none;
    width: 79px;
    height: 37px;
    padding: 0 25px;
    border: 1px solid #dae5e3;
    border-radius: 3px;
    background: #e8f2f0;
    color: #33373b;
    font: inherit;
}
.select-box svg {
    position: absolute;
    left: 8px;
    top: 11px;
    pointer-events: none;
}
.pager {
    display: flex;
    gap: 14px;
}
.pager button {
    width: 37px;
    height: 37px;
    border-radius: 3px;
    font-size: 14px;
}
.pager .selected {
    background: #1d9a6b;
    color: #fff;
}
.pager .arrow {
    background: #fff;
    border: 1px solid #d9e8e4;
}
.pager .arrow:disabled {
    opacity: 0.6;
}

/* footer */
.site-footer {
    flex: 1 0 auto;
    padding: 55px 134px 0;
    background: #2c2e2e;
    color: #fff;
    position: relative;
}
.contours {
    position: absolute;
    top: 0;
    left: 0;
    width: 100%;
    height: 285px;
}
.footer-main {
    position: relative;
    display: grid;
    grid-template-columns: 525px 270px 270px 1fr;
    height: 205px;
    border-bottom: 1px solid #cfd0d0;
}
.footer-logo {
    display: flex;
    gap: 12px;
    align-items: center;
}
.logo-text {
    display: flex;
    flex-direction: column;
    font-size: 19px;
    line-height: 23px;
}
.latin {
    font-family: Lato, sans-serif;
    font-size: 21px;
    letter-spacing: 2px;
}
.about p {
    margin: 20px 0 0;
    font-size: 13px;
    line-height: 22px;
    white-space: nowrap;
}
.social {
    display: flex;
    gap: 17px;
    margin: 17px 9px 0;
}
.social svg {
    width: 20px;
    height: 20px;
}
.links {
    padding-top: 64px;
}
.links h4 {
    margin: 0;
    font-size: 12px;
    line-height: 20px;
}
.links a {
    margin-top: 19px;
    display: flex;
    align-items: center;
    gap: 24px;
    font-size: 14px;
    line-height: 22px;
    white-space: nowrap;
}
.links a svg {
    width: 10px;
    height: 10px;
}
.partners {
    position: relative;
    direction: ltr;
    display: flex;
    flex-direction: row-reverse;
    justify-content: flex-end;
    gap: 4px;
    padding: 14px 14px 0;
    height: 24px;
}
.partners b {
    font: bold 20px Lato, sans-serif;
}
.partners span {
    font-size: 9px;
}
.activate {
    position: absolute;
    right: 1312px;
    bottom: 38px;
    display: flex;
    flex-direction: column;
    color: #818383;
    font-size: 13px;
    line-height: 20px;
    white-space: nowrap;
}
.activate-title {
    font-size: 17px;
}

/* taskbar */
.taskbar {
    height: 33px;
    flex: none;
    display: flex;
    color: #eee;
    background: linear-gradient(to right, #3d2b22, #3d2820 14%, #3e3224 17%, #451f20 21%, #4a1a20 24%, #41352a 32%, #3f3b2a 34%, #4a2423 38%, #482327 46%, #3f3023 53%, #402b24 60%, #44251f 70%, #3c2a22 82%, #38271f);
}
.start {
    width: 40px;
}
.search {
    width: 240px;
    display: flex;
    align-items: center;
    gap: 9px;
    padding-right: 9px;
    background: #f1f1f1;
    border: 1px solid #d8d8d8;
}
.search input {
    flex: 1;
    min-width: 0;
    border: 0;
    padding: 0;
    background: none;
    font: 12px "DejaVu Sans", sans-serif;
}
.search input::placeholder {
    color: #555;
}
.task {
    width: 41px;
    border-bottom: 2px solid transparent;
}
.task svg {
    width: 20px;
    height: 20px;
}
.task .small {
    width: 15px;
    height: 15px;
}
.open {
    width: 33px;
    margin: 0 4px;
    border-bottom-color: #76afe0;
}
.task.current {
    background: #74585a;
}
.adobe {
    width: 18px;
    height: 18px;
    border-radius: 3px;
    font-size: 11px;
    font-weight: bold;
    line-height: 18px;
}
.ai {
    background: #330500;
    color: #ff9a00;
}
.ps {
    background: #001e36;
    color: #31a8ff;
}
.tray {
    margin-right: auto;
    padding-left: 14px;
    display: flex;
    align-items: center;
    gap: 7px;
}
.keyboard {
    font-family: "Open Sans", sans-serif;
    font-size: 11px;
}
.clock {
    width: 44px;
    margin: 0 -3px;
    text-align: center;
    font-size: 9px;
    line-height: 15px;
}
.clock span {
    display: block;
    white-space: nowrap;
}
.notes {
    position: relative;
    width: 24px;
    height: 28px;
}
.notes span {
    position: absolute;
    left: 2px;
    bottom: 0;
    width: 13px;
    height: 13px;
    border: 1px solid #aaa;
    border-radius: 50%;
    background: #42291f;
    font-size: 9px;
    line-height: 11px;
}
```
